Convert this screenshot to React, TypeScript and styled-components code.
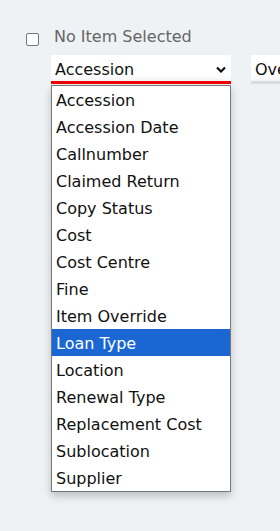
import styled, { createGlobalStyle } from "styled-components";

const GlobalStyle = createGlobalStyle`
  html, body {
    margin: 0;
    padding: 0;
    background: #eff2f5;
    font-family: "DejaVu Sans", "Noto Sans", sans-serif;
  }
`;

const Page = styled.div`
  width: 280px;
  height: 531px;
  overflow: hidden;
  padding: 27px 0 0 26px;
  box-sizing: border-box;
`;

const HeaderRow = styled.div`
  display: flex;
  align-items: center;
  gap: 15px;
  height: 17px;
`;

const Check = styled.span`
  width: 11px;
  height: 11px;
  border: 1px solid #767676;
  border-radius: 2px;
  background: #fff;
  margin-top: 8px;
`;

const Label = styled.span`
  font-size: 16px;
  color: #666;
  padding-top: 2px;
`;

const Filters = styled.div`
  display: flex;
  gap: 20px;
  margin: 11px 0 0 25px;
`;

const SelectWrap = styled.div`
  position: relative;
  flex: none;
`;

const SelectBox = styled.div<{ $active?: boolean; $w: number }>`
  position: relative;
  z-index: 2;
  width: ${(p) => p.$w}px;
  height: 29px;
  background: linear-gradient(#fff 75%, #f4f4f4);
  border-bottom: 3px solid ${(p) => (p.$active ? "#ee0000" : "#dcdcdc")};
  display: flex;
  align-items: center;
  justify-content: space-between;
  padding: 2px 5px 0 4px;
  box-sizing: border-box;
  font-size: 16px;
  color: #111;
`;

const Menu = styled.ul`
  position: absolute;
  z-index: 1;
  top: 30px;
  left: 0;
  width: 178px;
  margin: 0;
  padding: 0;
  list-style: none;
  background: #fff;
  border: 1px solid #777;
  box-shadow: 0 4px 8px rgba(0, 0, 0, 0.22);
`;

const Item = styled.li<{ $selected?: boolean }>`
  height: 27px;
  line-height: 25px;
  padding: 2px 0 0 4px;
  box-sizing: border-box;
  font-size: 16px;
  color: ${(p) => (p.$selected ? "#fff" : "#111")};
  background: ${(p) => (p.$selected ? "#1a66d2" : "transparent")};
  white-space: nowrap;
`;

const options = [
  "Accession",
  "Accession Date",
  "Callnumber",
  "Claimed Return",
  "Copy Status",
  "Cost",
  "Cost Centre",
  "Fine",
  "Item Override",
  "Loan Type",
  "Location",
  "Renewal Type",
  "Replacement Cost",
  "Sublocation",
  "Supplier",
];

const Chevron = () => (
  <svg width="10" height="7" viewBox="0 0 10 7">
    <path d="M1 1.5 L5 5.5 L9 1.5" fill="none" stroke="#111" strokeWidth="2.2" />
  </svg>
);

export default function App() {
  return (
    <Page>
      <GlobalStyle />
      <HeaderRow>
        <Check />
        <Label>No Item Selected</Label>
      </HeaderRow>
      <Filters>
        <SelectWrap>
          <SelectBox $active $w={180}>
            <span>Accession</span>
            <Chevron />
          </SelectBox>
          <Menu>
            {options.map((o) => (
              <Item key={o} $selected={o === "Loan Type"}>
                {o}
              </Item>
            ))}
          </Menu>
        </SelectWrap>
        <SelectBox $w={120}>
          <span>Overdue</span>
        </SelectBox>
      </Filters>
    </Page>
  );
}
